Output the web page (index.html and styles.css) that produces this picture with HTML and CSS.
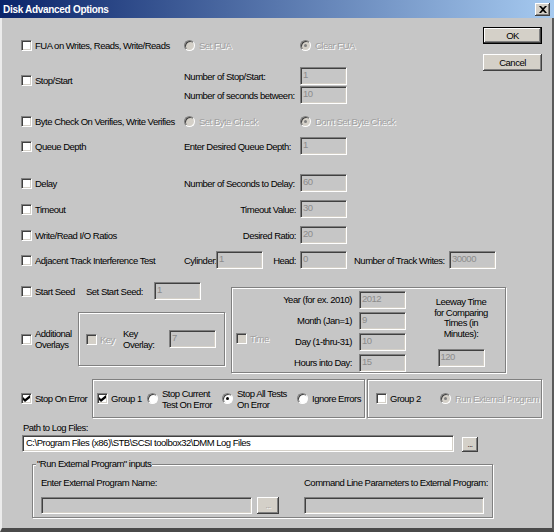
FILE: index.html
```html
<!DOCTYPE html>
<html>
<head>
<meta charset="utf-8">
<title>Disk Advanced Options</title>
<link rel="stylesheet" href="styles.css">
</head>
<body>
<div class="window">
  <div class="titlebar">
    <span class="title">Disk Advanced Options</span>
    <span class="close"><svg width="8" height="7" viewBox="0 0 8 7"><path d="M0 0h2l2 2 2-2h2L5 3.5 8 7H6L4 5 2 7H0l3-3.5z" fill="#000"/></svg></span>
  </div>
  <div class="frame">
    <div class="client">
      <div class="top">
        <div class="top-left">
          <div class="row">
            <label class="c1 chk"><span class="box"></span>FUA on Writes, Reads, Write/Reads</label>
            <span class="c2r opt dis"><span class="radio"></span>Set FUA</span>
            <span class="opt dis"><span class="radio on"></span>Clear FUA</span>
          </div>
          <div class="row2">
            <label class="c1 chk start"><span class="box"></span>Stop/Start</label>
            <div class="stack">
              <div class="sub"><span class="c2">Number of Stop/Start:</span><input class="inp" value="1" disabled></div>
              <div class="sub"><span class="c2">Number of seconds between:</span><input class="inp" value="10" disabled></div>
            </div>
          </div>
        </div>
        <div class="buttons">
          <button class="btn default">OK</button>
          <button class="btn cancel">Cancel</button>
        </div>
      </div>

      <div class="row m8">
        <label class="c1 chk"><span class="box"></span>Byte Check On Verifies, Write Verifies</label>
        <span class="c2r opt dis"><span class="radio"></span>Set Byte Check</span>
        <span class="opt dis"><span class="radio on"></span>Don't Set Byte Check</span>
      </div>
      <div class="row m7">
        <label class="c1 chk"><span class="box"></span>Queue Depth</label>
        <span class="c2">Enter Desired Queue Depth:</span><input class="inp" value="1" disabled>
      </div>
      <div class="row m19">
        <label class="c1 chk"><span class="box"></span>Delay</label>
        <span class="c2">Number of Seconds to Delay:</span><input class="inp" value="60" disabled>
      </div>
      <div class="row m8">
        <label class="c1 chk"><span class="box"></span>Timeout</label>
        <span class="c2 right">Timeout Value:</span><input class="inp" value="30" disabled>
      </div>
      <div class="row m8">
        <label class="c1 chk"><span class="box"></span>Write/Read I/O Ratios</label>
        <span class="c2 right">Desired Ratio:</span><input class="inp" value="20" disabled>
      </div>
      <div class="row m7">
        <label class="c1 chk"><span class="box"></span>Adjacent Track Interference Test</label>
        <span class="cyl">Cylinder:</span><input class="inp" value="1" disabled>
        <span class="head">Head:</span><input class="inp" value="0" disabled>
        <span class="tw">Number of Track Writes:</span><input class="inp" value="30000" disabled>
      </div>

      <div class="seed-block">
        <div class="seed-left">
          <div class="row">
            <label class="chk seedchk"><span class="box"></span>Start Seed</label>
            <span class="seedlbl">Set Start Seed:</span><input class="inp" value="1" disabled>
          </div>
          <div class="overlay-row">
            <label class="chk ovchk"><span class="box"></span><span class="two">Additional<br>Overlays</span></label>
            <div class="grp keybox">
              <label class="chk dis keychk"><span class="box dis"></span>Key</label>
              <span class="two keylbl">Key<br>Overlay:</span>
              <input class="inp" value="7" disabled>
            </div>
          </div>
        </div>
        <div class="grp timebox">
          <label class="chk dis tchk"><span class="box dis"></span>Time</label>
          <div class="tlabels">
            <span>Year (for ex. 2010)</span>
            <span>Month (Jan=1)</span>
            <span>Day (1-thru-31)</span>
            <span>Hours into Day:</span>
          </div>
          <div class="tinputs">
            <input class="inp" value="2012" disabled>
            <input class="inp" value="9" disabled>
            <input class="inp" value="10" disabled>
            <input class="inp" value="15" disabled>
          </div>
          <div class="leeway">
            <div class="ltext">Leeway Time<br>for Comparing<br>Times (in<br>Minutes):</div>
            <input class="inp" value="120" disabled>
          </div>
        </div>
      </div>

      <div class="grow">
        <label class="chk soe"><span class="box"><svg width="7" height="7" viewBox="0 0 7 7"><path d="M0 2l2 2 5-4v3L2 7 0 5z" fill="#000"/></svg></span>Stop On Error</label>
        <div class="grp g1">
          <label class="chk g1chk"><span class="box"><svg width="7" height="7" viewBox="0 0 7 7"><path d="M0 2l2 2 5-4v3L2 7 0 5z" fill="#000"/></svg></span>Group 1</label>
          <span class="opt ropt"><span class="radio"></span><span class="two">Stop Current<br>Test On Error</span></span>
          <span class="opt ropt"><span class="radio on"></span><span class="two">Stop All Tests<br>On Error</span></span>
          <span class="opt"><span class="radio"></span>Ignore Errors</span>
        </div>
        <div class="grp g2">
          <label class="chk g2chk"><span class="box"></span>Group 2</label>
          <span class="opt dis"><span class="radio on"></span>Run External Program</span>
        </div>
      </div>

      <div class="plabel">Path to Log Files:</div>
      <div class="prow">
        <input class="inp path" value="C:\Program Files (x86)\STB\SCSI toolbox32\DMM Log Files">
        <button class="btn browse">...</button>
      </div>

      <div class="grp ext">
        <span class="ext-title">"Run External Program" inputs</span>
        <div class="ext-body">
          <div class="ecol">
            <div class="elabel">Enter External Program Name:</div>
            <div class="erow">
              <input class="inp ename" value="" disabled>
              <button class="btn ebrowse" disabled>...</button>
            </div>
          </div>
          <div class="ecol ecol2">
            <div class="elabel">Command Line Parameters to External Program:</div>
            <div class="erow">
              <input class="inp eparams" value="" disabled>
            </div>
          </div>
        </div>
      </div>
    </div>
  </div>
</div>
</body>
</html>
```

FILE: styles.css
```css
* { box-sizing: border-box; }
html, body { margin: 0; padding: 0; }
body {
  width: 554px;
  height: 532px;
  overflow: hidden;
  background: #c6c6c6;
  font-family: "Liberation Sans", Arial, sans-serif;
  font-size: 9.5px;
  letter-spacing: -0.5px;
  color: #000;
}
.window { width: 554px; height: 532px; display: flex; flex-direction: column; }

.titlebar {
  height: 18px;
  flex: none;
  display: flex;
  align-items: center;
  justify-content: space-between;
  padding: 0 4px 0 3px;
  background: linear-gradient(to right, #0a246a, #a6caf0);
}
.title { color: #fff; font-weight: bold; font-size: 10px; letter-spacing: -0.3px; }
.close {
  width: 15px; height: 13px;
  background: #d4d0c8;
  box-shadow: inset -1px -1px #404040, inset 1px 1px #fff, inset -2px -2px #808080;
  display: flex; align-items: center; justify-content: center;
}

.frame {
  flex: 1;
  border-left: 2px solid #ececec;
  border-right: 2px solid #5a5a5a;
  border-bottom: 4px solid #4a4a4a;
  padding: 0 2px;
}
.client { padding-left: 17px; }

/* controls */
.chk { display: flex; align-items: center; white-space: nowrap; }
.box {
  flex: none;
  width: 11px; height: 11px;
  margin-right: 3px;
  background: #fff;
  border: 1px solid; border-color: #808080 #fff #fff #808080;
  box-shadow: inset 1px 1px #404040, inset -1px -1px #d4d0c8;
  display: flex; align-items: center; justify-content: center;
}
.box.dis { background: #d4d0c8; }
.opt { display: flex; align-items: center; white-space: nowrap; }
.radio {
  flex: none;
  width: 11px; height: 11px;
  margin-right: 4px;
  border-radius: 50%;
  background: #fff;
  border: 1px solid; border-color: #808080 #fff #fff #808080;
  box-shadow: inset 1px 1px #404040;
  display: flex; align-items: center; justify-content: center;
}
.radio.on::after { content: ""; width: 3px; height: 3px; border-radius: 50%; background: #000; }
.dis { color: #a0a0a0; text-shadow: 1px 1px 0 #fff; }
.dis .radio { background: #d4d0c8; }
.dis .radio.on::after { background: #808080; }

.inp {
  flex: none;
  width: 47px; height: 18px;
  margin: 0;
  padding: 0 2px 3px 2px;
  font: inherit;
  letter-spacing: inherit;
  color: #8c8c8c;
  background: #c6c6c6;
  border: 1px solid; border-color: #808080 #fff #fff #808080;
  box-shadow: inset 1px 1px #404040, inset -1px -1px #d4d0c8;
  outline: none;
}
.btn {
  font: inherit;
  letter-spacing: inherit;
  color: #000;
  background: #d4d0c8;
  border: none;
  padding: 0;
  box-shadow: inset -1px -1px #404040, inset 1px 1px #fff, inset -2px -2px #808080;
  display: flex; align-items: center; justify-content: center;
}
.grp { border: 1px solid #808080; box-shadow: inset 1px 1px #fff, 1px 1px #fff; }
.two { line-height: 11px; }

/* top section */
.top { display: flex; }
.top-left { flex: 1; padding-top: 18px; }
.buttons { width: 59px; margin-right: 8px; padding-top: 9px; display: flex; flex-direction: column; }
.buttons .btn { width: 59px; height: 17px; }
.btn.default { border: 1px solid #000; box-shadow: inset -1px -1px #404040, inset 1px 1px #fff, inset -2px -2px #808080; }
.btn.cancel { margin-top: 10px; }

.row { display: flex; align-items: center; height: 18px; }
.c1 { width: 163px; flex: none; }
.c2 { width: 112px; margin-right: 4px; flex: none; white-space: nowrap; }
.c2.right { text-align: right; }
.c2r { width: 116px; flex: none; }
.row2 { display: flex; margin-top: 13px; }
.row2 .start { align-self: flex-start; margin-top: 8px; }
.stack { display: flex; flex-direction: column; gap: 1px; }
.sub { display: flex; align-items: center; height: 18px; }
.m7 { margin-top: 7px; }
.m8 { margin-top: 8px; }
.m19 { margin-top: 19px; }

.cyl { width: 32px; flex: none; }
.head { width: 37px; padding-right: 4px; text-align: right; flex: none; }
.tw { width: 95px; margin-left: 7px; flex: none; white-space: nowrap; }

/* seed / overlays / time */
.seed-block { display: flex; align-items: flex-start; margin-top: 13px; }
.seed-left { width: 204px; flex: none; }
.seedchk { width: 65px; flex: none; }
.seedlbl { width: 68px; flex: none; white-space: nowrap; }
.overlay-row { display: flex; align-items: center; margin-top: 12px; }
.ovchk { width: 57px; flex: none; }
.keybox { width: 147px; height: 54px; display: flex; align-items: center; padding-left: 7px; }
.keychk { width: 37px; flex: none; }
.keylbl { width: 46px; flex: none; }

.timebox {
  width: 275px; height: 86px;
  margin: 5px 0 0 6px;
  padding: 3px 0 0 4px;
  display: flex; align-items: flex-start;
}
.tchk { width: 39px; flex: none; margin-top: 42px; }
.tlabels { width: 77px; flex: none; display: grid; grid-auto-rows: 18px; row-gap: 3px; text-align: right; white-space: nowrap; }
.tlabels span { line-height: 18px; }
.tinputs { margin-left: 7px; display: grid; grid-auto-rows: 18px; row-gap: 3px; }
.leeway { margin-left: 22px; width: 66px; flex: none; display: flex; flex-direction: column; align-items: center; padding-top: 6px; }
.ltext { text-align: center; line-height: 10.5px; white-space: nowrap; }
.leeway .inp { margin-top: 10px; }

/* stop on error groups */
.grow { display: flex; align-items: center; height: 39px; margin-top: 6px; }
.soe { width: 71px; flex: none; }
.g1 { width: 273px; height: 39px; flex: none; display: flex; align-items: center; padding-left: 4px; }
.g1chk { width: 50px; flex: none; }
.ropt { width: 75px; flex: none; }
.g2 { width: 175px; height: 39px; flex: none; margin-left: 2px; display: flex; align-items: center; padding-left: 8px; }
.g2chk { width: 64px; flex: none; }

/* path */
.plabel { margin: 4px 0 0 2px; line-height: 12px; }
.prow { display: flex; align-items: flex-end; margin: 1px 0 0 1px; }
.inp.path { width: 432px; height: 17px; background: #fff; color: #000; padding: 0 3px 2px 3px; }
.btn.browse { width: 16px; height: 15px; margin-left: 8px; font-size: 8px; }

/* external program group */
.ext { width: 461px; height: 54px; margin: 12px 0 0 11px; }
.ext-title { display: block; width: fit-content; margin: -7px 0 0 3px; padding: 0 1px; background: #c6c6c6; line-height: 12px; }
.ext-body { display: flex; padding-left: 8px; margin-top: 7px; }
.elabel { line-height: 12px; white-space: nowrap; }
.erow { display: flex; margin-top: 8px; }
.inp.ename { width: 211px; height: 17px; }
.btn.ebrowse { width: 22px; height: 17px; margin-left: 5px; color: #a0a0a0; text-shadow: 1px 1px 0 #fff; font-size: 8px; }
.ecol2 { margin-left: 25px; }
.inp.eparams { width: 180px; height: 17px; }
```
